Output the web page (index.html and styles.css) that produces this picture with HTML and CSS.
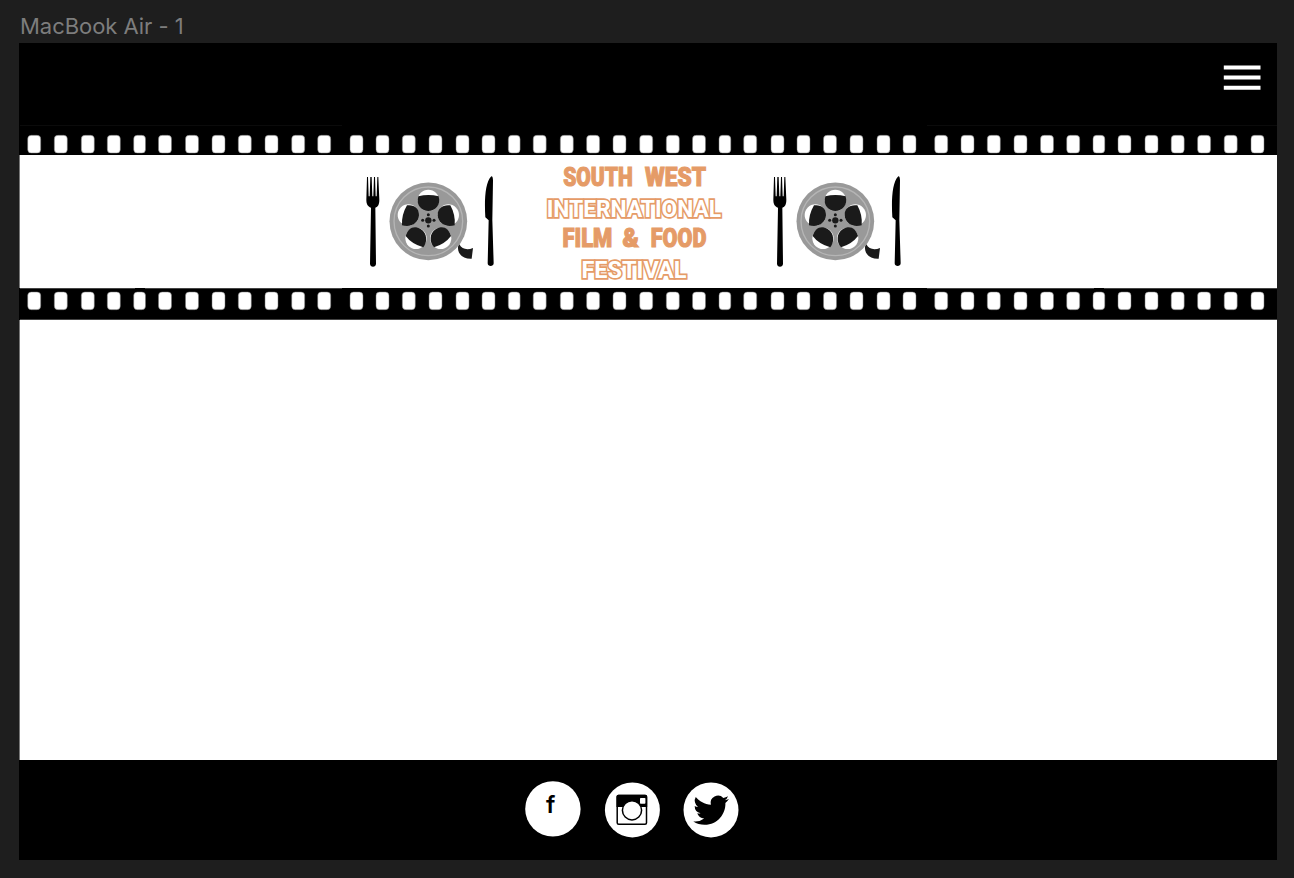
FILE: index.html
```html
<!DOCTYPE html>
<html lang="en">
<head>
<meta charset="utf-8">
<title>South West International Film &amp; Food Festival</title>
<link rel="stylesheet" href="styles.css">
</head>
<body>
<div class="frame-label">MacBook Air - 1</div>
<main class="frame">
  <header class="topbar">
    <svg class="menu" width="38" height="26" viewBox="0 0 38 26"><path fill="#fff" d="M.8.4h36.7v4H.8zM.8 10.6h36.7v4H.8zM.8 20.8h36.7v4H.8z"/></svg>
  </header>
  <svg class="strip" width="1258" height="30" viewBox="19 0 1258 30">
    <path stroke="#0b0b0b" d="M20 .5H342M927 .5H1277"/>
    <g class="holes" id="holes" transform="translate(0 10.3)"></g>
  </svg>
  <section class="banner">
    <svg class="emblem" width="150" height="115" viewBox="0 0 450 345">
      <defs>
        <g id="emblem">
          <path d="M36 36h3l2 58h3l2-58h4l2 58h3l2-58h3l2 58h3l2-58h3l3 68c0 14-4 21-12 24l2 168c0 12-18 12-18 0l3-168c-10-4-14-11-14-24z"/>
          <path d="M409 34c4 0 5 6 5 13l-2 118 4 130c0 11-18 11-18 0l3-129-10-9c-3-50-1-105 18-123z"/>
          <circle cx="220" cy="169" r="116.5" fill="#999"/>
          <circle cx="220" cy="169" r="103" fill="none" stroke="#b5b5b5" stroke-width="4"/>
          <g fill="#fff"><circle cx="220" cy="106" r="32"/><circle cx="280" cy="150" r="32"/><circle cx="257" cy="220" r="32"/><circle cx="183" cy="220" r="32"/><circle cx="160" cy="150" r="32"/></g>
          <g fill="#1a1a1a">
            <path d="M190 94Q220 86 251 94C258 120 242 138 220 138S182 120 190 94z"/>
            <path d="M286 121Q302 150 299 181C270 189 249 173 248 151S264 118 286 121z"/>
            <path d="M288 213Q270 237 237 247C223 233 222 204 243 192S281 190 288 213z"/>
            <path d="M152 213Q170 237 205 247C217 233 218 204 197 192S159 190 152 213z"/>
            <path d="M156 121Q139 150 141 181C170 189 191 173 192 151S177 118 156 121z"/>
            <circle cx="220" cy="166" r="9.5"/><circle cx="220" cy="149" r="4.5"/><circle cx="220" cy="183" r="4.5"/><circle cx="203" cy="166" r="4.5"/><circle cx="237" cy="166" r="4.5"/>
            <path d="M313 238c8 15 24 18 41 11l-4 32c-25 1-43-12-41-36z"/>
          </g>
        </g>
      </defs>
      <use href="#emblem"/>
    </svg>
    <svg class="title" width="200" height="125" viewBox="0 0 200 125">
      <g class="solid">
        <text x="28.2" y="26" textLength="69.6" lengthAdjust="spacingAndGlyphs">SOUTH</text>
        <text x="110" y="26" textLength="61" lengthAdjust="spacingAndGlyphs">WEST</text>
        <text x="27.6" y="87.3" textLength="49.7" lengthAdjust="spacingAndGlyphs">FILM</text>
        <text x="87.6" y="87.3" textLength="16.5" lengthAdjust="spacingAndGlyphs">&amp;</text>
        <text x="115.8" y="87.3" textLength="55.6" lengthAdjust="spacingAndGlyphs">FOOD</text>
      </g>
      <g class="outline">
        <text x="11.7" y="57.4" textLength="174.5" lengthAdjust="spacingAndGlyphs">INTERNATIONAL</text>
        <text x="46.4" y="118" textLength="105" lengthAdjust="spacingAndGlyphs">FESTIVAL</text>
      </g>
    </svg>
    <svg class="emblem" width="150" height="115" viewBox="0 0 450 345"><use href="#emblem"/></svg>
  </section>
  <svg class="strip" width="1258" height="32" viewBox="19 0 1258 32">
    <path stroke="#444" d="M20 .5H342M927 .5H1277M20 31.5H1277"/>
    <path stroke="#000" stroke-width="1.5" d="M135 .3h10M1094 .3h10"/>
    <use href="#holes" y="-6.3"/>
  </svg>
  <section class="content"></section>
  <footer class="footer">
    <svg width="56" height="56" viewBox="0 0 56 56"><circle cx="27.9" cy="27.9" r="27.7" fill="#fff"/><text class="fb" x="21" y="31.7">f</text></svg>
    <svg class="low" width="56" height="56" viewBox="0 0 56 56">
      <circle cx="28.4" cy="27.9" r="27.5" fill="#fff"/>
      <rect x="13.2" y="13.6" width="29.3" height="28.6" rx="1.5" fill="#fff" stroke="#000" stroke-width="1.5"/>
      <path d="M12.5 14.5q0-1.7 1.7-1.7h27.3q1.7 0 1.7 1.7V25H12.5z"/>
      <rect x="36" y="16" width="5.4" height="5.8" rx=".7" fill="#fff"/>
      <circle cx="28" cy="28.3" r="9.6" fill="#fff" stroke="#000" stroke-width="1.5"/>
    </svg>
    <svg class="low" width="56" height="56" viewBox="0 0 56 56">
      <circle cx="28" cy="27.9" r="27.5" fill="#fff"/>
      <path transform="translate(10.3 10.3) scale(1.49)" d="M23.95 4.57a10 10 0 0 1-2.82.77 4.96 4.96 0 0 0 2.16-2.72c-.95.55-2 .95-3.13 1.18a4.92 4.92 0 0 0-8.38 4.48C7.69 8.09 4.07 6.13 1.64 3.16a4.92 4.92 0 0 0 1.52 6.57 4.9 4.9 0 0 1-2.23-.61v.06a4.92 4.92 0 0 0 3.95 4.83 5 5 0 0 1-2.21.08 4.94 4.94 0 0 0 4.6 3.42A9.87 9.87 0 0 1 0 19.54a14 14 0 0 0 7.55 2.21c9.05 0 14-7.5 14-13.98 0-.21 0-.42-.02-.63a9.94 9.94 0 0 0 2.42-2.57z"/>
    </svg>
  </footer>
</main>
<script src="script.js"></script>
</body>
</html>
```
FILE: styles.css
```css
body { margin: 0; height: 878px; overflow: hidden; background: #1e1e1e; font-family: Inter, sans-serif; }
.frame-label { height: 43px; padding-left: 20px; box-sizing: border-box; line-height: 52px; font-size: 22px; color: #7d7d7d; letter-spacing: -.04px; }
.frame { width: 1257px; margin-left: 19px; border-left: 1px solid #777; background: #fff; }
.topbar { display: flex; justify-content: flex-end; height: 82px; padding: 22px 16px 0 0; box-sizing: border-box; background: #000; margin-left: -1px; }
.strip { display: block; background: #000; margin-left: -1px; }
.holes { fill: #fff; stroke: #777; stroke-width: .5; }
.banner { display: flex; height: 133px; padding-left: 335px; box-sizing: border-box; }
.emblem { margin-top: 10px; }
.title { margin: 5px 27.3px 0 30px; overflow: visible; }
.title text { font-family: "Roboto", sans-serif; font-weight: 900; font-size: 25.3px; fill: #e59b67; }
.title .solid text { stroke: #e59b67; stroke-width: 1.1; }
.title .outline text { font-weight: 700; font-size: 24.6px; fill: #fff; stroke: #e59b67; stroke-width: 3.3; paint-order: stroke; }
.content { height: 440px; }
.footer { display: flex; height: 100px; margin-left: -1px; padding: 21px 0 0 506px; box-sizing: border-box; gap: 23px; background: #000; }
.low { margin-top: 1px; }
.fb { font: 600 24px Inter, sans-serif; }
```
FILE: script.js
```js
const holes = document.getElementById("holes");
const lefts = [27.7, 54.3, 81.3, 107.3, 133.7, 158.5, 185.5, 212, 238.3, 265, 291.7, 317.7,
  350, 376, 402.3, 429, 456, 482, 508.3, 533.2, 560.3, 586.6, 613, 639.7,
  666.3, 692.5, 719, 743.7, 771, 797, 823.5, 850, 877, 903,
  934.7, 961, 987.3, 1014, 1040.5, 1066.7, 1093, 1118, 1145, 1171.2, 1197.6, 1224.2, 1251];
const narrow = [133.7, 508.3, 719, 1093];
lefts.forEach((x) => {
  const hole = document.createElementNS("http://www.w3.org/2000/svg", "rect");
  hole.setAttribute("x", x);
  hole.setAttribute("width", narrow.includes(x) ? 11.8 : 13);
  hole.setAttribute("height", 17.7);
  hole.setAttribute("rx", 3.6);
  holes.append(hole);
});
```
